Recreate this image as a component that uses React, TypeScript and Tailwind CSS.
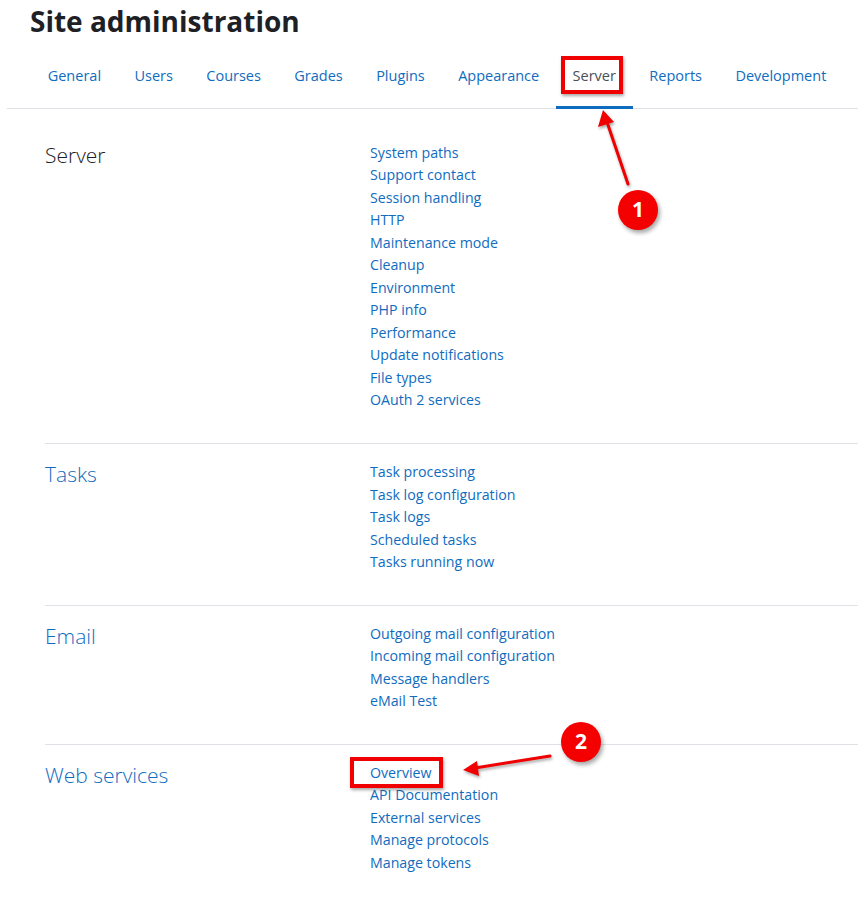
const tabs = ["General", "Users", "Courses", "Grades", "Plugins", "Appearance", "Server", "Reports", "Development"];

const sections = [
  {
    title: "Server",
    dark: true,
    links: [
      "System paths",
      "Support contact",
      "Session handling",
      "HTTP",
      "Maintenance mode",
      "Cleanup",
      "Environment",
      "PHP info",
      "Performance",
      "Update notifications",
      "File types",
      "OAuth 2 services",
    ],
  },
  {
    title: "Tasks",
    links: ["Task processing", "Task log configuration", "Task logs", "Scheduled tasks", "Tasks running now"],
  },
  {
    title: "Email",
    links: ["Outgoing mail configuration", "Incoming mail configuration", "Message handlers", "eMail Test"],
  },
  {
    title: "Web services",
    links: ["Overview", "API Documentation", "External services", "Manage protocols", "Manage tokens"],
  },
];

function Badge({ n }: { n: number }) {
  return (
    <div className="flex h-[40px] w-[40px] items-center justify-center rounded-full bg-[#f50000] text-[21px] font-bold text-white shadow-[2px_3px_4px_rgba(0,0,0,0.35)]">
      {n}
    </div>
  );
}

export default function App() {
  return (
    <div
      className="relative h-[903px] w-[858px] overflow-hidden bg-white text-[#1d2125]"
      style={{ fontFamily: '"Open Sans", "Noto Sans", sans-serif' }}
    >
      <h1 className="pl-[30px] pt-[1px] text-[28px] font-bold leading-[40px] text-[#1d2125]">Site administration</h1>

      {/* Tab row */}
      <nav className="ml-[7px] mt-[6px] flex border-b border-[#dee2e6] pl-[24px] text-[14.5px]">
        {tabs.map((t) => (
          <a
            key={t}
            className={
              t === "Server"
                ? "relative -mb-px border-b-[3px] border-[#0f6cbf] px-[16.7px] pb-[18px] pt-[18px] text-[#495057]"
                : "relative px-[16.7px] pb-[21px] pt-[18px] text-[#0f6cbf]"
            }
          >
            {t}
          </a>
        ))}
      </nav>

      {/* Category sections */}
      <div className="ml-[45px] pt-[33px]">
        {sections.map((s, i) => (
          <section
            key={s.title}
            className={i === 0 ? "flex pb-[31.5px]" : "flex border-t border-[#dee2e6] pb-[31px] pt-[17px]"}
          >
            <h4
              className={
                "w-[325px] text-[21px] font-light leading-[27px] " + (s.dark ? "text-[#1d2125]" : "text-[#0f6cbf]")
              }
            >
              {s.title}
            </h4>
            <ul className="text-[14.2px] leading-[22.5px] text-[#0f6cbf]">
              {s.links.map((l) => (
                <li key={l}>{l}</li>
              ))}
            </ul>
          </section>
        ))}
      </div>

      {/* Annotations */}
      <div className="absolute left-[561px] top-[56px] h-[38px] w-[62px] border-[4px] border-[#f00000] shadow-[1px_2px_3px_rgba(0,0,0,0.35)]" />
      <div className="absolute left-[350px] top-[757px] h-[31px] w-[93px] border-[4px] border-[#f00000] shadow-[1px_2px_3px_rgba(0,0,0,0.35)]" />

      <svg className="absolute left-0 top-0" width="858" height="903" style={{ filter: "drop-shadow(1px 2px 1.5px rgba(0,0,0,0.35))" }}>
        <line x1="628" y1="184" x2="607" y2="122" stroke="#f00000" strokeWidth="3" strokeLinecap="round" />
        <polygon points="603,110 598,127 614,122" fill="#f00000" />
        <line x1="550" y1="756" x2="475" y2="768" stroke="#f00000" strokeWidth="3" strokeLinecap="round" />
        <polygon points="463,770 477,761 479,776" fill="#f00000" />
      </svg>

      <div className="absolute left-[618px] top-[190px]">
        <Badge n={1} />
      </div>
      <div className="absolute left-[561px] top-[722px]">
        <Badge n={2} />
      </div>
    </div>
  );
}
